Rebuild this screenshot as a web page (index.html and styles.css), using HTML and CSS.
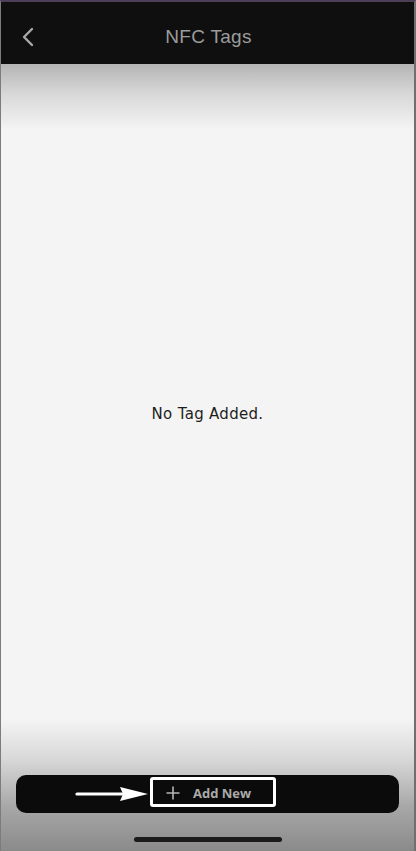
FILE: index.html
```html
<!DOCTYPE html>
<html lang="en">
<head>
    <meta charset="UTF-8">
    <meta name="viewport" content="width=device-width, initial-scale=1.0">
    <title>NFC Tags</title>
    <link rel="stylesheet" href="styles.css">
</head>
<body>
    <div class="phone">
        <header>
            <div class="back-btn">
                <svg width="14" height="20" viewBox="0 0 14 20">
                    <path d="M11 2 L3 10 L11 18" fill="none" stroke="#a9a9a9" stroke-width="2.4" stroke-linecap="round" stroke-linejoin="round"/>
                </svg>
            </div>
            <h1>NFC Tags</h1>
        </header>

        <main class="content">
            <div class="empty">
                <p>No Tag Added.</p>
            </div>

            <div class="add-bar">
                <svg class="arrow" width="74" height="16" viewBox="0 0 74 16">
                    <line x1="2" y1="8" x2="50" y2="8" stroke="#fff" stroke-width="3.2" stroke-linecap="round"/>
                    <path d="M45 1 L73 8 L45 15 L48 8 Z" fill="#fff"/>
                </svg>
                <div class="add-btn">
                    <svg width="14" height="14" viewBox="0 0 14 14">
                        <path d="M7 0.5 V13.5 M0.5 7 H13.5" stroke="#b5b5b5" stroke-width="1.6"/>
                    </svg>
                    <span>Add New</span>
                </div>
            </div>

            <div class="home-indicator"></div>
        </main>
    </div>
</body>
</html>
```

FILE: styles.css
```css
body {
    margin: 0;
    font-family: 'Liberation Sans', Arial, sans-serif;
    background-color: #0e0e0e;
}

.phone {
    width: 416px;
    height: 851px;
    box-sizing: border-box;
    border-top: 2px solid #4e3f58;
    border-left: 1px solid #7c7c7c;
    border-right: 2px solid #6f6f6f;
    display: flex;
    flex-direction: column;
}

header {
    height: 62px;
    box-sizing: border-box;
    padding-top: 7px;
    background-color: #0f0f0f;
    display: flex;
    align-items: center;
    justify-content: center;
    position: relative;
}

header h1 {
    margin: 0;
    font-size: 19px;
    font-weight: normal;
    color: #9c9c9c;
    letter-spacing: 0.3px;
    padding-left: 2px;
}

.back-btn {
    position: absolute;
    left: 20px;
    top: 25px;
    line-height: 0;
}

.content {
    flex: 1;
    display: flex;
    flex-direction: column;
    background: linear-gradient(to bottom,
        #b4b4b4 0,
        #d8d8d8 30px,
        #f4f4f4 66px,
        #f4f4f4 calc(100% - 132px),
        #d8d8d8 calc(100% - 92px),
        #a8a8a8 calc(100% - 45px),
        #8a8a8a 100%);
}

.empty {
    flex: 1;
    display: flex;
    align-items: center;
    justify-content: center;
    padding-bottom: 12px;
}

.empty p {
    margin: 0;
    font-family: 'DejaVu Sans', sans-serif;
    font-size: 15px;
    letter-spacing: 0.3px;
    color: #1e1e1e;
}

.add-bar {
    height: 38px;
    margin: 0 15px;
    padding: 2px 0 0 59px;
    box-sizing: border-box;
    background-color: #0b0b0b;
    border-radius: 10px;
    display: flex;
    align-items: flex-start;
}

.arrow {
    margin-top: 9px;
}

.add-btn {
    margin-left: 1px;
    width: 126px;
    height: 30px;
    box-sizing: border-box;
    border: 3px solid #ffffff;
    border-radius: 3px;
    display: flex;
    align-items: center;
    padding-left: 13px;
    padding-top: 2px;
    gap: 13px;
}

.add-btn span {
    font-family: 'Open Sans', sans-serif;
    font-weight: 700;
    font-size: 13px;
    color: #aaaaaa;
}

.home-indicator {
    width: 148px;
    height: 5px;
    border-radius: 3px;
    background-color: #1b1b1b;
    margin: 24px auto 9px;
}
```
